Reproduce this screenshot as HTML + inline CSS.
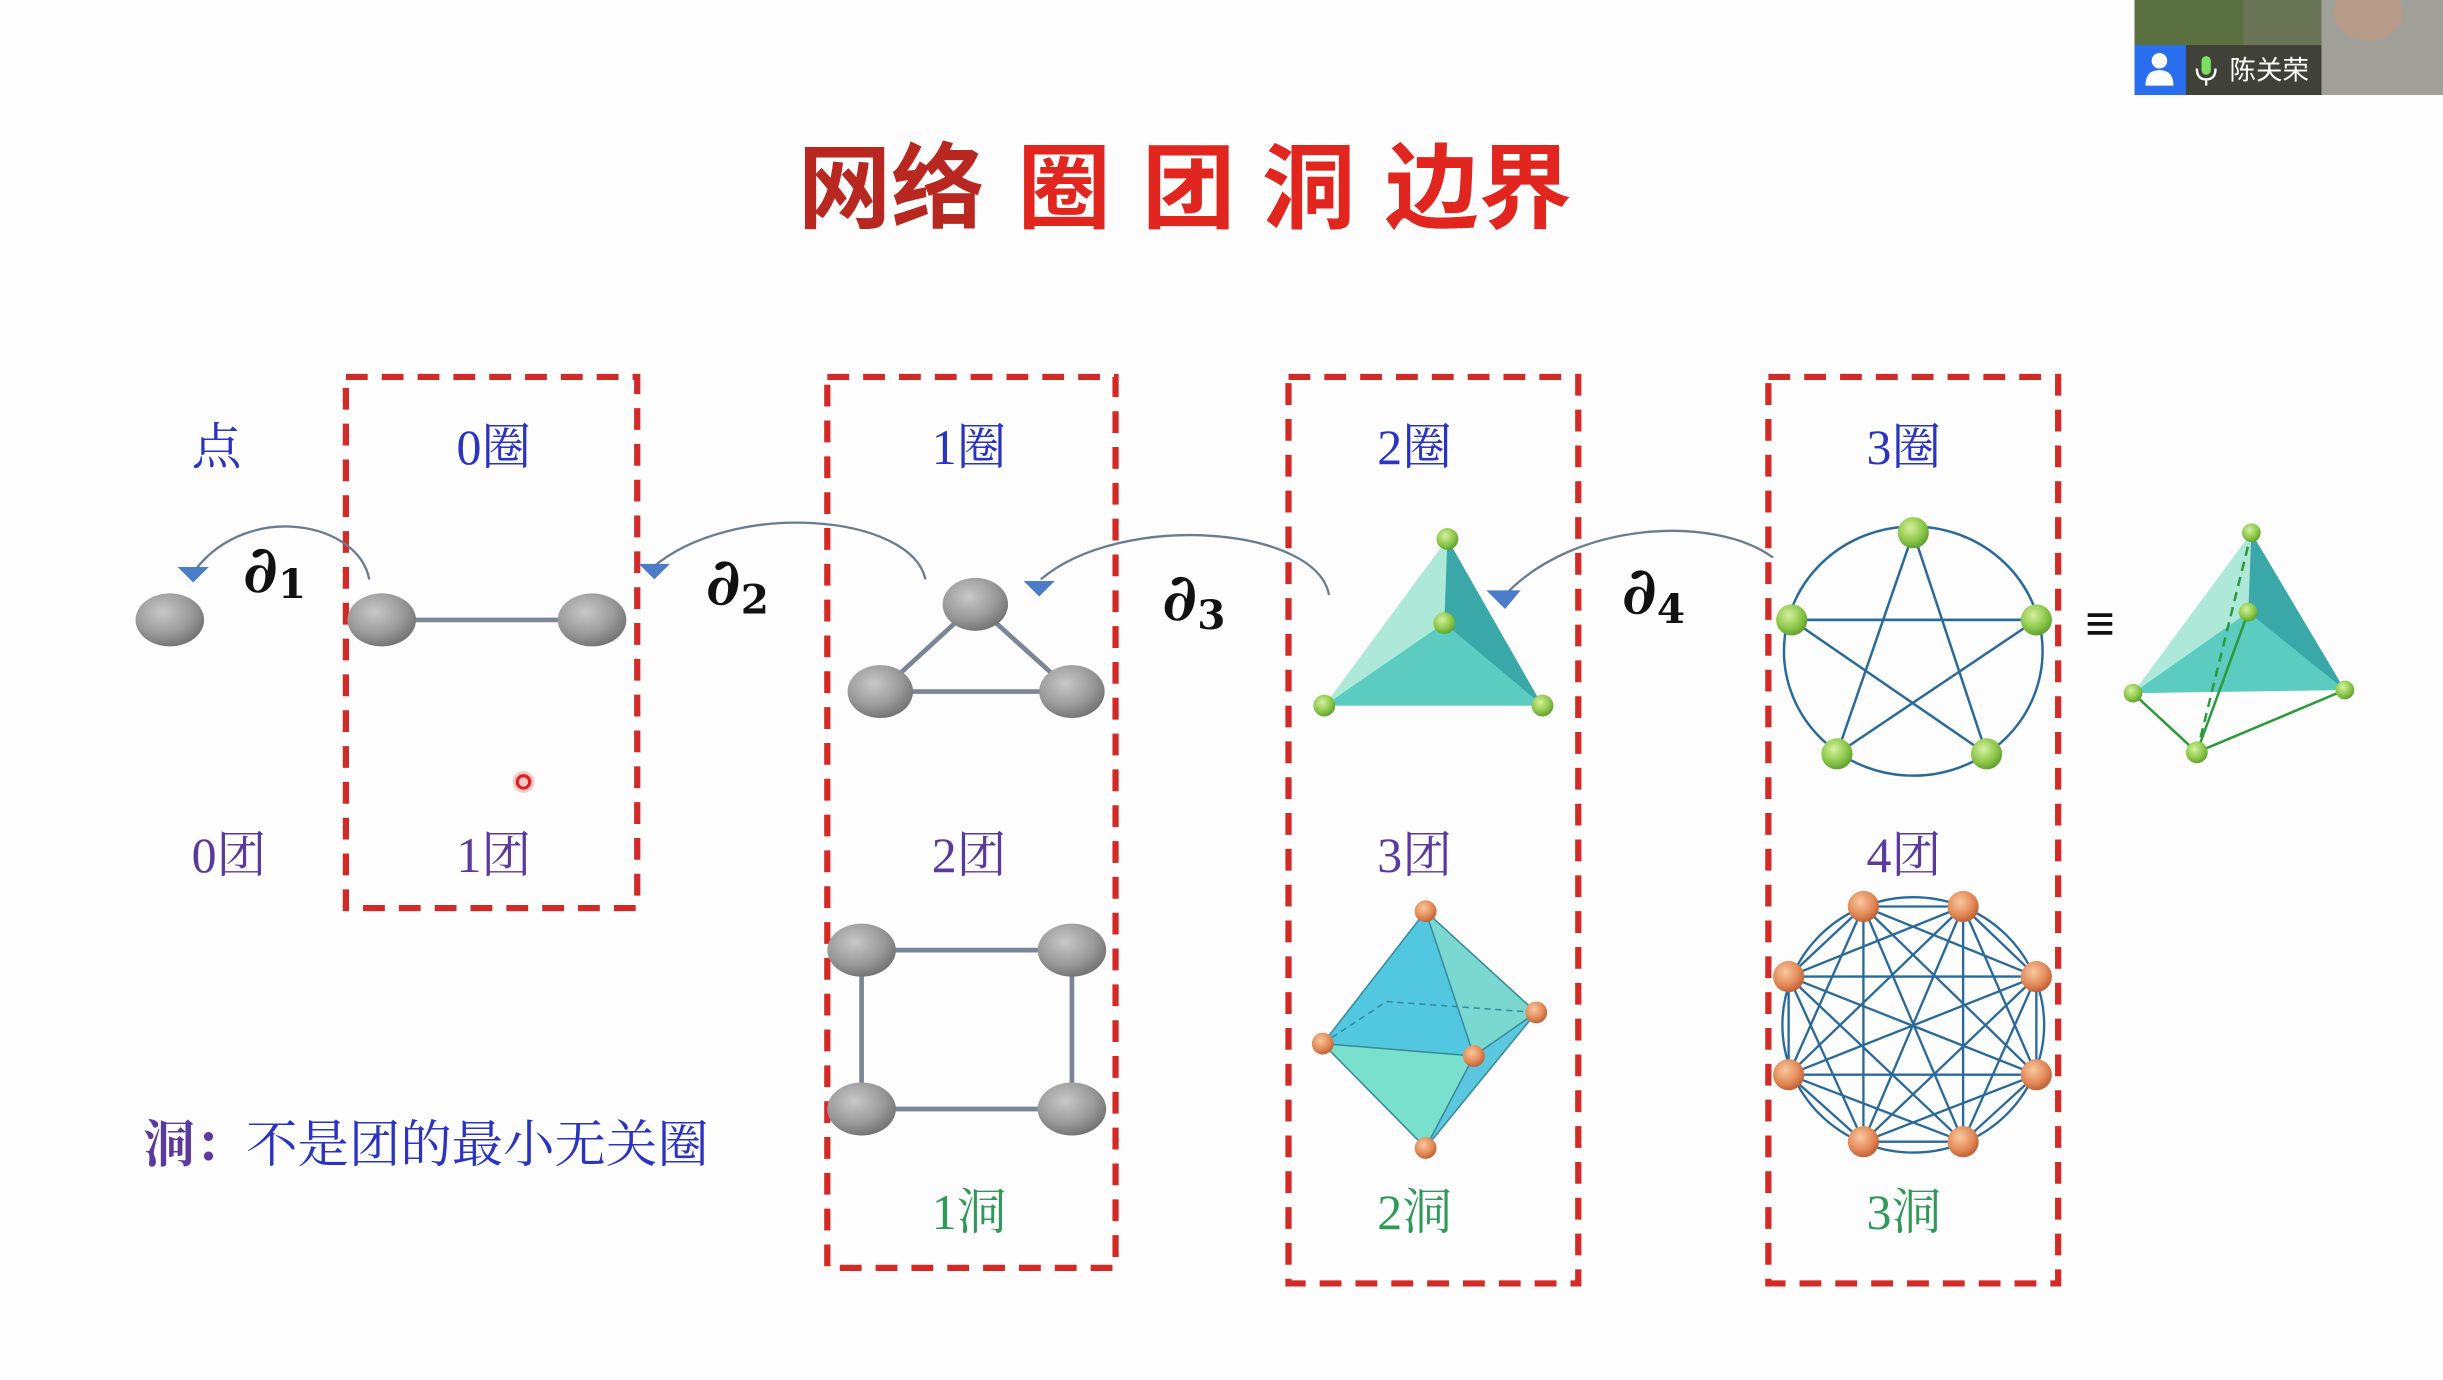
<!DOCTYPE html>
<html><head><meta charset="utf-8"><style>
html,body{margin:0;padding:0;background:#fdfdfd;overflow:hidden}
svg{display:block}
text{font-family:"Liberation Serif","Noto Serif CJK SC","Noto Sans CJK SC",serif}
</style></head><body>
<svg width="2443" height="1380" viewBox="0 0 1568 886" preserveAspectRatio="none" xmlns="http://www.w3.org/2000/svg">
<defs>
<radialGradient id="g" cx="0.4" cy="0.35" r="0.7"><stop offset="0" stop-color="#c8c8c8"/><stop offset="0.6" stop-color="#9a9a9a"/><stop offset="1" stop-color="#6e6e6e"/></radialGradient>
<radialGradient id="gr" cx="0.4" cy="0.35" r="0.7"><stop offset="0" stop-color="#d6f0a0"/><stop offset="0.6" stop-color="#8cc84a"/><stop offset="1" stop-color="#5a9a2a"/></radialGradient>
<radialGradient id="or" cx="0.4" cy="0.35" r="0.7"><stop offset="0" stop-color="#f8c8a0"/><stop offset="0.6" stop-color="#e48a58"/><stop offset="1" stop-color="#b85a30"/></radialGradient>
</defs>
<rect width="1568" height="886" fill="#fdfdfd"/>
<g font-weight="bold" font-size="60">
<text x="512" y="142" fill="#b82820" style="font-family:'Noto Sans CJK SC',sans-serif">网络</text>
<text x="653" y="142" fill="#e0261e" style="font-family:'Noto Sans CJK SC',sans-serif">圈</text>
<text x="733" y="142" fill="#e0261e" style="font-family:'Noto Sans CJK SC',sans-serif">团</text>
<text x="810" y="142" fill="#e0261e" style="font-family:'Noto Sans CJK SC',sans-serif">洞</text>
<text x="889" y="142" fill="#e0261e" style="font-family:'Noto Sans CJK SC',sans-serif">边界</text>
</g>
<g fill="none" stroke="#d22a26" stroke-width="4" stroke-dasharray="14 9">
<rect x="222" y="242" width="187" height="341"/>
<rect x="531" y="242" width="185" height="572"/>
<rect x="827" y="242" width="186" height="582"/>
<rect x="1135" y="242" width="186" height="582"/>
</g>
<g font-size="32" text-anchor="middle">
<text x="139" y="298" fill="#2a34c0">点</text>
<text x="317" y="298" fill="#2a34c0">0圈</text>
<text x="622" y="298" fill="#2a34c0">1圈</text>
<text x="908" y="298" fill="#2a34c0">2圈</text>
<text x="1222" y="298" fill="#2a34c0">3圈</text>
<text x="147" y="560" fill="#5a3a9e">0团</text>
<text x="317" y="560" fill="#5a3a9e">1团</text>
<text x="622" y="560" fill="#5a3a9e">2团</text>
<text x="908" y="560" fill="#5a3a9e">3团</text>
<text x="1222" y="560" fill="#5a3a9e">4团</text>
<text x="622" y="789" fill="#2e9a58">1洞</text>
<text x="908" y="789" fill="#2e9a58">2洞</text>
<text x="1222" y="789" fill="#2e9a58">3洞</text>
</g>
<text x="92" y="746" font-size="33"><tspan fill="#5a3a9e" font-weight="bold">洞：</tspan><tspan fill="#2a34c0">不是团的最小无关圈</tspan></text>
<g fill="none" stroke="#6a7c90" stroke-width="1.5">
<path d="M237 372 C230 335 160 322 126 365"/>
<path d="M594 372 C585 330 470 320 418 365"/>
<path d="M853 382 C845 338 720 328 668 372"/>
<path d="M1138 358 C1100 330 1010 335 966 382"/>
</g>
<g fill="#4a7cc8">
<polygon points="114,364 134,364 124,374"/>
<polygon points="410,362 430,362 420,372"/>
<polygon points="657,373 677,373 667,383"/>
<polygon points="954,379 976,379 966,391"/>
</g>
<g font-weight="bold" fill="#111" style="font-family:'DejaVu Serif',serif">
<text x="156" y="380" font-size="42" font-style="italic" style="font-family:'DejaVu Serif',serif">∂<tspan font-size="26" dy="4" font-style="normal">1</tspan></text>
<text x="453" y="388" font-size="42" font-style="italic" style="font-family:'DejaVu Serif',serif">∂<tspan font-size="26" dy="6" font-style="normal">2</tspan></text>
<text x="746" y="398" font-size="42" font-style="italic" style="font-family:'DejaVu Serif',serif">∂<tspan font-size="26" dy="6" font-style="normal">3</tspan></text>
<text x="1041" y="394" font-size="42" font-style="italic" style="font-family:'DejaVu Serif',serif">∂<tspan font-size="26" dy="6" font-style="normal">4</tspan></text>
</g>
<g stroke="#7a8698" stroke-width="3">
<line x1="245" y1="398" x2="380" y2="398"/>
<polygon points="626,388 565,444 688,444" fill="none"/>
<polygon points="553,610 688,610 688,712 553,712" fill="none"/>
</g>
<g fill="url(#g)">
<ellipse cx="109" cy="398" rx="22" ry="17"/><ellipse cx="245" cy="398" rx="22" ry="17"/><ellipse cx="380" cy="398" rx="22" ry="17"/>
<ellipse cx="626" cy="388" rx="21" ry="17"/><ellipse cx="565" cy="444" rx="21" ry="17"/><ellipse cx="688" cy="444" rx="21" ry="17"/>
<ellipse cx="553" cy="610" rx="22" ry="17"/><ellipse cx="688" cy="610" rx="22" ry="17"/><ellipse cx="553" cy="712" rx="22" ry="17"/><ellipse cx="688" cy="712" rx="22" ry="17"/>
</g>
<circle cx="336" cy="502" r="7" fill="#f6b0b0" opacity="0.7"/><circle cx="336" cy="502" r="4" fill="none" stroke="#e02020" stroke-width="2"/>
<polygon points="929,346 850,453 990,453" fill="#aee8d8"/>
<polygon points="927,400 850,453 990,453" fill="#5ccbc0"/>
<polygon points="929,346 927,400 990,453" fill="#3aa8a8"/>
<g fill="url(#gr)"><circle cx="929" cy="346" r="7"/><circle cx="927" cy="400" r="7"/><circle cx="850" cy="453" r="7"/><circle cx="990" cy="453" r="7"/></g>
<g fill="none" stroke="#2a6a9a" stroke-width="1.6">
<ellipse cx="1228" cy="418" rx="83" ry="80"/>
<line x1="1150" y1="398" x2="1307" y2="398"/>
<polyline points="1228,342 1179,484 1307,398 1150,398 1275,484 1228,342"/>
</g>
<g fill="url(#gr)"><circle cx="1228" cy="342" r="10"/><circle cx="1150" cy="398" r="10"/><circle cx="1307" cy="398" r="10"/><circle cx="1179" cy="484" r="10"/><circle cx="1275" cy="484" r="10"/></g>
<text x="1348" y="412" font-size="34" text-anchor="middle" fill="#111" font-weight="bold">≡</text>
<polygon points="1445,342 1369,445 1505,443" fill="#aee8d8"/>
<polygon points="1443,393 1369,445 1505,443" fill="#5ccbc0"/>
<polygon points="1445,342 1443,393 1505,443" fill="#3aa8a8"/>
<g stroke="#2a9a3a" stroke-width="1.6" fill="none">
<polyline points="1369,445 1410,483 1505,443"/>
<line x1="1410" y1="483" x2="1443" y2="393"/>
<line x1="1410" y1="483" x2="1445" y2="342" stroke-dasharray="6 4"/>
</g>
<g fill="url(#gr)"><circle cx="1445" cy="342" r="6"/><circle cx="1443" cy="393" r="6"/><circle cx="1369" cy="445" r="6"/><circle cx="1505" cy="443" r="6"/><circle cx="1410" cy="483" r="7"/></g>
<polygon points="915,585 849,670 915,737" fill="#4ec6d8" opacity="0.9"/>
<polygon points="915,585 946,678 986,650" fill="#7ad8d0"/>
<polygon points="915,585 849,670 946,678" fill="#52c8e0"/>
<polygon points="849,670 946,678 915,737" fill="#78e0cc"/>
<polygon points="946,678 986,650 915,737" fill="#5cc8e0"/>
<g stroke="#3a8a9a" stroke-width="1" fill="none">
<polyline points="915,585 849,670 915,737 986,650 915,585 946,678 915,737"/>
<line x1="849" y1="670" x2="946" y2="678"/><line x1="946" y1="678" x2="986" y2="650"/>
<polyline points="849,670 890,643 986,650" stroke-dasharray="4 3"/>
</g>
<g fill="url(#or)"><circle cx="915" cy="585" r="7"/><circle cx="849" cy="670" r="7"/><circle cx="986" cy="650" r="7"/><circle cx="946" cy="678" r="7"/><circle cx="915" cy="737" r="7"/></g>
<g fill="none" stroke="#2a6a9a" stroke-width="1.5">
<ellipse cx="1228" cy="658" rx="84" ry="82"/>
<path d="M1196 582L1307 627M1196 582L1307 690M1196 582L1260 733M1196 582L1196 733M1196 582L1148 690M1260 582L1148 627M1260 582L1148 690M1260 582L1196 733M1260 582L1260 733M1260 582L1307 690M1307 627L1148 627M1307 627L1196 733M1307 627L1148 690M1307 627L1260 733M1307 690L1148 690M1307 690L1148 627M1307 690L1196 733M1260 733L1148 627M1260 733L1148 690M1196 733L1148 627M1196 582L1260 582M1196 733L1260 733M1148 627L1148 690M1307 627L1307 690M1196 582L1148 627M1260 582L1307 627M1307 690L1260 733M1196 733L1148 690"/>
</g>
<g fill="url(#or)"><circle cx="1196" cy="582" r="10"/><circle cx="1260" cy="582" r="10"/><circle cx="1307" cy="627" r="10"/><circle cx="1307" cy="690" r="10"/><circle cx="1260" cy="733" r="10"/><circle cx="1196" cy="733" r="10"/><circle cx="1148" cy="690" r="10"/><circle cx="1148" cy="627" r="10"/></g>
<rect x="1370" y="0" width="198" height="61" fill="#6a7456"/>
<rect x="1370" y="0" width="70" height="30" fill="#5a7040"/>
<rect x="1490" y="0" width="78" height="61" fill="#a0a098"/>
<ellipse cx="1520" cy="8" rx="22" ry="18" fill="#b89a88"/>
<rect x="1403" y="29" width="87" height="32" fill="#3c3c36" opacity="0.9"/>
<rect x="1370" y="29" width="33" height="32" fill="#2a6ef0"/>
<circle cx="1386" cy="39" r="5" fill="#fff"/><path d="M1377 55 Q1377 45 1386 45 Q1395 45 1395 55 Z" fill="#fff"/>
<rect x="1413" y="36" width="6" height="12" rx="3" fill="#7be060"/>
<path d="M1410 44 Q1410 51 1416 51 Q1422 51 1422 44 M1416 51 L1416 55" stroke="#fff" stroke-width="1.5" fill="none"/>
<text x="1431" y="51" font-size="17" fill="#fff" style="font-family:'Noto Sans CJK SC',sans-serif">陈关荣</text>
</svg>
</body></html>
